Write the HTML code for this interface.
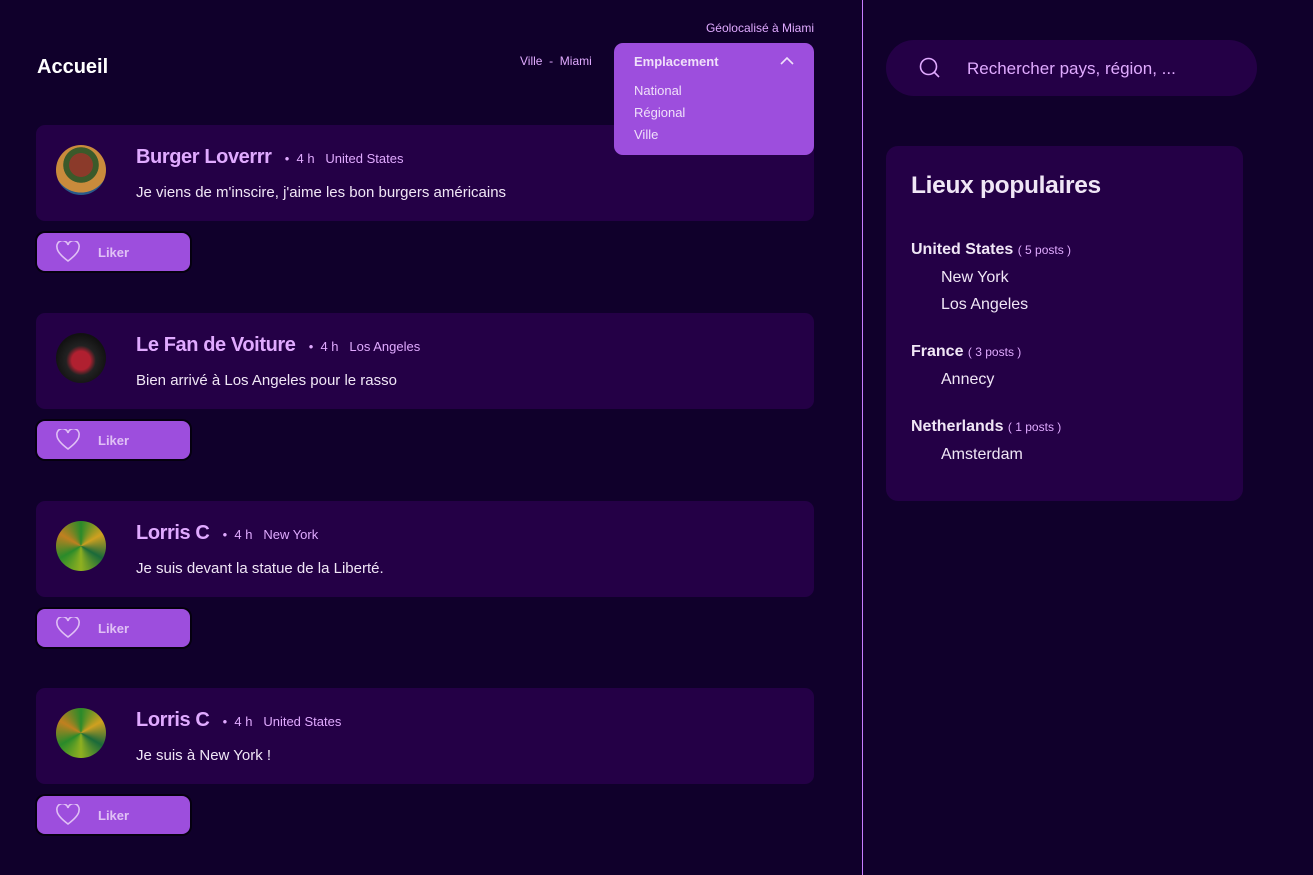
<!DOCTYPE html>
<html><head><meta charset="utf-8"><style>
*{margin:0;padding:0;box-sizing:border-box}
body{width:1313px;height:875px;background:#10002b;font-family:"Liberation Sans",sans-serif;color:#e9e0f0;position:relative;overflow:hidden}
.abs{position:absolute}
.divider{left:862px;top:0;width:1px;height:875px;background:#c77dff}
.card{position:absolute;left:36px;width:778px;height:96px;background:#240046;border-radius:9px}
.av{position:absolute;left:20px;top:20px;width:50px;height:50px;border-radius:50%}
.name{position:absolute;left:100px;top:21px;font-size:20px;font-weight:bold;color:#e0aaff;letter-spacing:-0.4px;white-space:nowrap}
.name span{font-size:13px;font-weight:normal;color:#e0aaff;letter-spacing:0;margin-left:8px}
.txt{position:absolute;left:100px;top:59px;font-size:15px;color:#f0e6f6}
.like{position:absolute;left:37px;width:153px;height:38px;background:#9d4edd;border-radius:8px;box-shadow:0 0 0 2px #05000f}
.like svg{position:absolute;left:19px;top:8px}
.like b{position:absolute;left:61px;top:12px;font-size:13px;color:#e0c0f5}
</style></head><body>
<div class="abs divider"></div>
<div class="abs" style="left:37px;top:56px;font-size:20px;font-weight:bold;color:#fff">Accueil</div>
<div class="abs" style="left:701px;top:21px;font-size:12px;color:#e0aaff;width:113px;text-align:right">Géolocalisé à Miami</div>
<div class="abs" style="left:520px;top:54px;font-size:12px;color:#e0aaff">Ville&nbsp; -&nbsp; Miami</div>

<div class="card" style="top:125px"><div class="av" style="background:radial-gradient(circle at 50% 40%,#8b3a2a 0 30%,#3b5a2a 31% 45%,#c98b3c 46% 70%,#2a5a8a 71%)"></div><div class="name">Burger Loverrr <span>•&nbsp; 4 h&nbsp;&nbsp; United States</span></div><div class="txt">Je viens de m'inscire, j'aime les bon burgers américains</div></div>
<div class="like" style="top:233px"><svg width="24" height="22" viewBox="0 0 24 22"><path d="M12 20 C4 14 1 10 1 6.5 A5.5 5.5 0 0 1 12 4 A5.5 5.5 0 0 1 23 6.5 C23 10 20 14 12 20Z" fill="none" stroke="#e0c0f5" stroke-width="1.6"/></svg><b>Liker</b></div>

<div class="card" style="top:313px"><div class="av" style="background:radial-gradient(circle at 50% 55%,#b02030 0 25%,#222 40%,#111 70%)"></div><div class="name">Le Fan de Voiture <span>•&nbsp; 4 h&nbsp;&nbsp; Los Angeles</span></div><div class="txt">Bien arrivé à Los Angeles pour le rasso</div></div>
<div class="like" style="top:421px"><svg width="24" height="22" viewBox="0 0 24 22"><path d="M12 20 C4 14 1 10 1 6.5 A5.5 5.5 0 0 1 12 4 A5.5 5.5 0 0 1 23 6.5 C23 10 20 14 12 20Z" fill="none" stroke="#e0c0f5" stroke-width="1.6"/></svg><b>Liker</b></div>

<div class="card" style="top:501px"><div class="av" style="background:conic-gradient(#2a8a2a,#d0a020,#1a6a3a,#90b020,#2a8a2a,#c08020,#2a8a2a)"></div><div class="name">Lorris C <span>•&nbsp; 4 h&nbsp;&nbsp; New York</span></div><div class="txt">Je suis devant la statue de la Liberté.</div></div>
<div class="like" style="top:609px"><svg width="24" height="22" viewBox="0 0 24 22"><path d="M12 20 C4 14 1 10 1 6.5 A5.5 5.5 0 0 1 12 4 A5.5 5.5 0 0 1 23 6.5 C23 10 20 14 12 20Z" fill="none" stroke="#e0c0f5" stroke-width="1.6"/></svg><b>Liker</b></div>

<div class="card" style="top:688px"><div class="av" style="background:conic-gradient(#2a8a2a,#d0a020,#1a6a3a,#90b020,#2a8a2a,#c08020,#2a8a2a)"></div><div class="name">Lorris C <span>•&nbsp; 4 h&nbsp;&nbsp; United States</span></div><div class="txt">Je suis à New York !</div></div>
<div class="like" style="top:796px"><svg width="24" height="22" viewBox="0 0 24 22"><path d="M12 20 C4 14 1 10 1 6.5 A5.5 5.5 0 0 1 12 4 A5.5 5.5 0 0 1 23 6.5 C23 10 20 14 12 20Z" fill="none" stroke="#e0c0f5" stroke-width="1.6"/></svg><b>Liker</b></div>

<div class="abs" style="left:614px;top:43px;width:200px;height:112px;background:#9d4edd;border-radius:9px">
<div class="abs" style="left:20px;top:11px;font-size:13px;font-weight:bold;color:#f0e0fa">Emplacement</div>
<svg class="abs" style="left:166px;top:13px" width="14" height="10" viewBox="0 0 14 10"><path d="M1 8 L7 2 L13 8" fill="none" stroke="#f0e0fa" stroke-width="1.6"/></svg>
<div class="abs" style="left:20px;top:37px;font-size:13px;line-height:22px;color:#f0e0fa">National<br>Régional<br>Ville</div>
</div>

<div class="abs" style="left:886px;top:40px;width:371px;height:56px;background:#240046;border-radius:28px">
<svg class="abs" style="left:33px;top:17px" width="22" height="22" viewBox="0 0 22 22"><circle cx="9.5" cy="9.5" r="8" fill="none" stroke="#e0aaff" stroke-width="1.6"/><path d="M15.5 15.5 L20 20" stroke="#e0aaff" stroke-width="1.6"/></svg>
<div class="abs" style="left:81px;top:19px;font-size:17px;color:#e0aaff">Rechercher pays, région, ...</div>
</div>

<div class="abs" style="left:886px;top:146px;width:357px;height:355px;background:#240046;border-radius:12px">
<div class="abs" style="left:25px;top:26px;font-size:24.5px;font-weight:bold;color:#f0e6f6;letter-spacing:-0.3px">Lieux populaires</div>
<div class="abs" style="left:25px;top:90px;font-size:16px;line-height:27px;color:#f0e6f6">
<b>United States</b> <span style="font-size:12px;color:#e0aaff">( 5 posts )</span><br>
<span style="margin-left:30px">New York</span><br>
<span style="margin-left:30px">Los Angeles</span></div>
<div class="abs" style="left:25px;top:192px;font-size:16px;line-height:27px;color:#f0e6f6">
<b>France</b> <span style="font-size:12px;color:#e0aaff">( 3 posts )</span><br>
<span style="margin-left:30px">Annecy</span></div>
<div class="abs" style="left:25px;top:267px;font-size:16px;line-height:27px;color:#f0e6f6">
<b>Netherlands</b> <span style="font-size:12px;color:#e0aaff">( 1 posts )</span><br>
<span style="margin-left:30px">Amsterdam</span></div>
</div>
</body></html>
